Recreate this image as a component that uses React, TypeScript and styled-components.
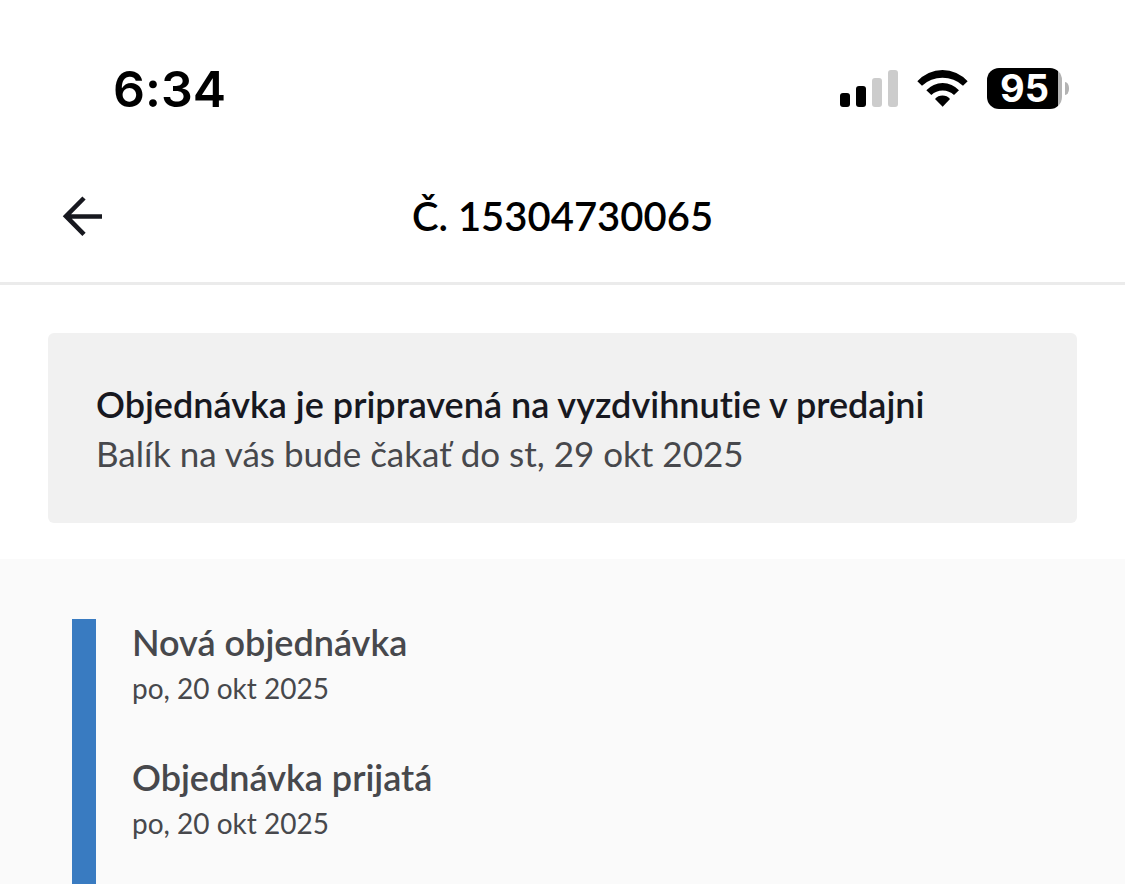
import React from 'react';
import styled, { createGlobalStyle } from 'styled-components';

const GlobalStyle = createGlobalStyle`
  *, *::before, *::after { box-sizing: border-box; }
  body {
    margin: 0;
    background: #ffffff;
    font-family: Lato, "Liberation Sans", sans-serif;
    font-variant-ligatures: none;
  }
  h1, h2, h3, p, ol { margin: 0; padding: 0; }
`;

const Screen = styled.div`
  display: flex;
  flex-direction: column;
  min-height: 100vh;
`;

const StatusBar = styled.div`
  display: flex;
  flex: none;
  align-items: center;
  justify-content: space-between;
  height: 150px;
  padding: 27px 56px 0 113px;
  font-family: Inter, "Liberation Sans", sans-serif;
`;

const Clock = styled.time`
  font-size: 50px;
  font-weight: 600;
  line-height: 60px;
  color: #000000;
`;

const StatusIcons = styled.div`
  display: flex;
  align-items: center;
  gap: 19px;
`;

const Signal = styled.div`
  display: flex;
  align-items: flex-end;
  gap: 6px;
`;

const SignalBar = styled.span<{ $height: number; $on?: boolean }>`
  width: 10px;
  height: ${(p) => p.$height}px;
  border-radius: 3px;
  background: ${(p) => (p.$on ? '#000000' : '#cccccc')};
`;

const Battery = styled.div`
  display: flex;
  align-items: center;
  gap: 3px;
`;

const BatteryBody = styled.div`
  width: 75px;
  height: 41px;
  border-radius: 12px;
  background: linear-gradient(to right, #000000 71px, #b3b3b3 71px);
  color: #ffffff;
  font-size: 38px;
  font-weight: 700;
  line-height: 41px;
  text-align: center;
`;

const BatteryTip = styled.span`
  width: 4px;
  height: 13px;
  border-radius: 0 4px 4px 0 / 0 6px 6px 0;
  background: #b3b3b3;
`;

const Header = styled.header`
  display: grid;
  flex: none;
  grid-template-columns: 72px 1fr 72px;
  align-items: center;
  height: 135px;
  padding: 0 48px;
  border-bottom: 3px solid #ebebeb;
`;

const BackButton = styled.button`
  display: flex;
  align-items: center;
  justify-content: center;
  width: 68px;
  height: 72px;
  padding: 0;
  border: 0;
  background: none;
  color: #17181f;
`;

const Title = styled.h1`
  font-size: 40px;
  font-weight: 600;
  line-height: 48px;
  text-align: center;
  color: #000000;
`;

const Notice = styled.section`
  flex: none;
  margin: 48px 48px 36px;
  padding: 46px 48px;
  border-radius: 6px;
  background: #f1f1f1;
`;

const NoticeTitle = styled.h2`
  font-size: 36px;
  font-weight: 600;
  line-height: 50px;
  color: #17181f;
`;

const NoticeText = styled.p`
  font-size: 35px;
  line-height: 48px;
  color: #47484c;
`;

const History = styled.section`
  display: flex;
  flex: 1;
  gap: 36px;
  padding: 60px 72px 0;
  background: #fafafa;
`;

const Track = styled.div`
  flex: none;
  width: 24px;
  background: #397bc1;
`;

const Steps = styled.ol`
  display: flex;
  flex-direction: column;
  gap: 43px;
  list-style: none;
`;

const StepTitle = styled.h3`
  font-size: 36px;
  font-weight: 600;
  line-height: 46px;
  color: #47484c;
`;

const StepDate = styled.p`
  font-size: 28px;
  line-height: 46px;
  color: #47484c;
`;

const steps = [
  { title: 'Nová objednávka', date: 'po, 20 okt 2025' },
  { title: 'Objednávka prijatá', date: 'po, 20 okt 2025' },
];

const WifiIcon = () => (
  <svg width="51" height="37" viewBox="0 0 153 111" aria-hidden="true">
    <path d="M1 34A101 101 0 0 1 152 34L138 47A91 91 0 0 0 15 47Z" />
    <path d="M28 61A66 66 0 0 1 126 61L111 75A49 49 0 0 0 43 75Z" />
    <path d="M54 87A29 29 0 0 1 99 87L77 110Z" />
  </svg>
);

const BackIcon = () => (
  <svg width="40" height="40" viewBox="0 0 40 40" fill="none" stroke="currentColor" strokeWidth="4.6" aria-hidden="true">
    <path d="M22 2L4 20.2L22 38.4M3 20.5H40" />
  </svg>
);

export default function App() {
  return (
    <Screen>
      <GlobalStyle />
      <StatusBar>
        <Clock>6:34</Clock>
        <StatusIcons>
          <Signal>
            <SignalBar $height={14} $on />
            <SignalBar $height={21} $on />
            <SignalBar $height={29} />
            <SignalBar $height={37} />
          </Signal>
          <WifiIcon />
          <Battery>
            <BatteryBody>95</BatteryBody>
            <BatteryTip />
          </Battery>
        </StatusIcons>
      </StatusBar>
      <Header>
        <BackButton type="button" aria-label="Späť">
          <BackIcon />
        </BackButton>
        <Title>Č. 15304730065</Title>
      </Header>
      <Notice>
        <NoticeTitle>Objednávka je pripravená na vyzdvihnutie v predajni</NoticeTitle>
        <NoticeText>Balík na vás bude čakať do st, 29 okt 2025</NoticeText>
      </Notice>
      <History>
        <Track />
        <Steps>
          {steps.map((step) => (
            <li key={step.title}>
              <StepTitle>{step.title}</StepTitle>
              <StepDate>{step.date}</StepDate>
            </li>
          ))}
        </Steps>
      </History>
    </Screen>
  );
}
